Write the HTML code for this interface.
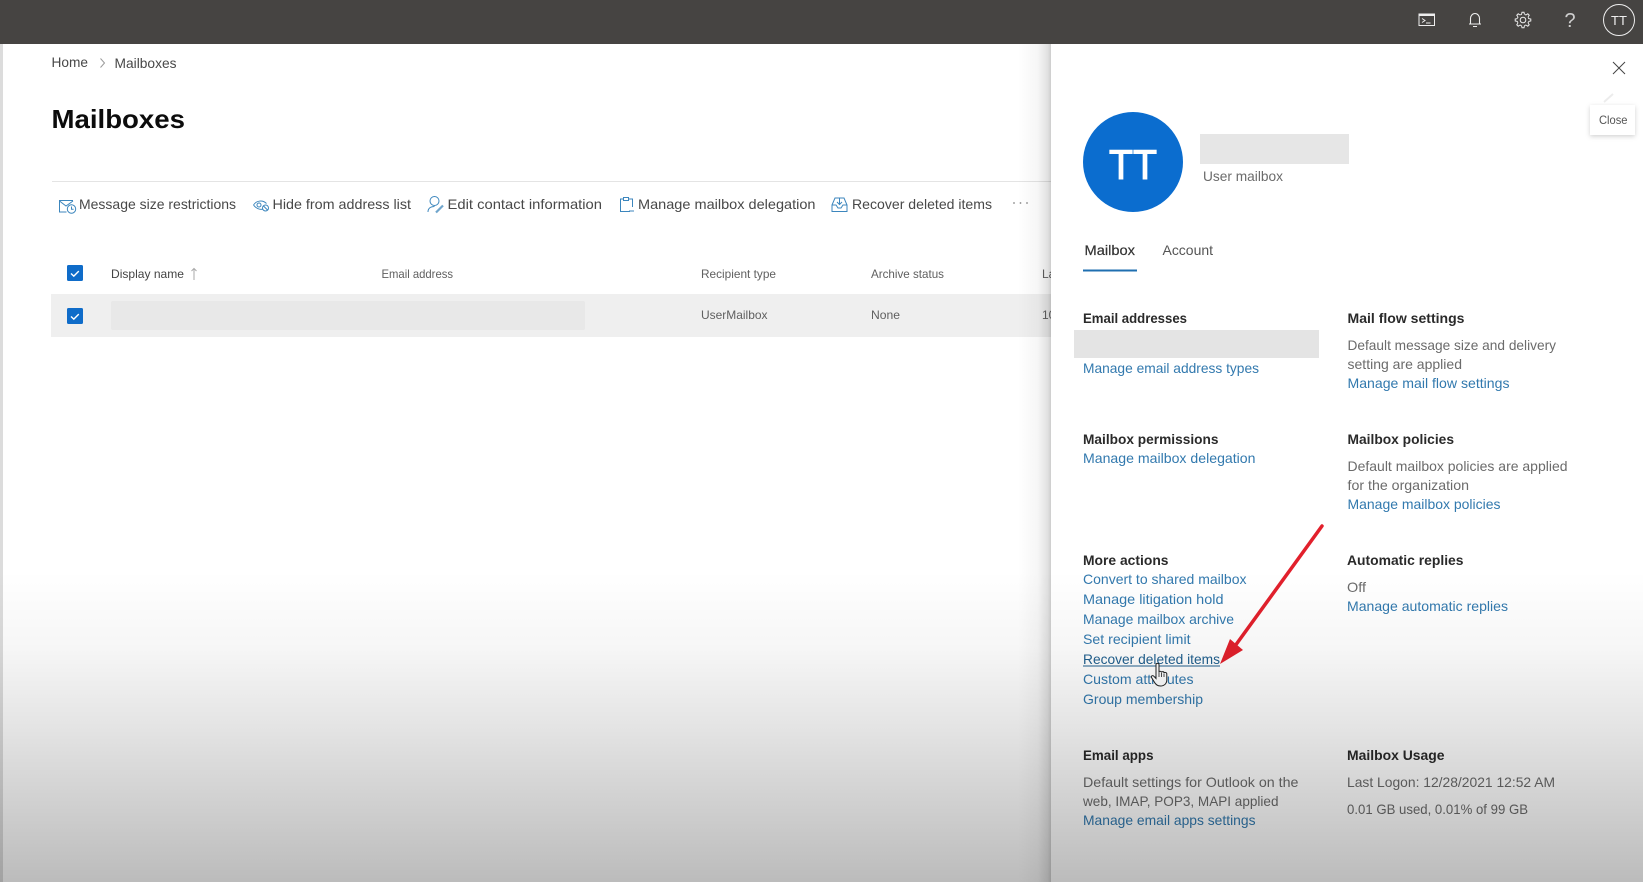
<!DOCTYPE html>
<html lang="en">
<head>
<meta charset="utf-8">
<title>Mailboxes</title>
<style>
html,body{margin:0;padding:0;background:#fff;width:1643px;height:882px;overflow:hidden}
svg{display:block;filter:blur(.3px)}
text{font-family:"Liberation Sans",Arial,sans-serif}
.b{font-size:14px;fill:#6b6b6b}
.l{font-size:14px;fill:#3279ae}
.h{font-size:14px;font-weight:bold;fill:#2a2a2a}
.c{font-size:14px;fill:#484848}
.t{font-size:12px;fill:#606060}
.ic{fill:none;stroke:#3c86bd;stroke-width:1}
</style>
</head>
<body>
<svg width="1643" height="882" viewBox="0 0 1643 882" xmlns="http://www.w3.org/2000/svg">
<defs>
<linearGradient id="sh" gradientUnits="userSpaceOnUse" x1="1018" y1="0" x2="1051" y2="0">
<stop offset="0" stop-color="#000" stop-opacity="0"/>
<stop offset=".6" stop-color="#000" stop-opacity=".035"/>
<stop offset=".9" stop-color="#000" stop-opacity=".12"/>
<stop offset="1" stop-color="#000" stop-opacity=".2"/>
</linearGradient>
<linearGradient id="fade" gradientUnits="userSpaceOnUse" x1="0" y1="570" x2="0" y2="882">
<stop offset="0" stop-color="#000" stop-opacity="0"/>
<stop offset=".25" stop-color="#000" stop-opacity=".035"/>
<stop offset=".48" stop-color="#000" stop-opacity=".1"/>
<stop offset="1" stop-color="#000" stop-opacity=".265"/>
</linearGradient>
<filter id="tip" x="-30%" y="-30%" width="160%" height="170%">
<feDropShadow dx="0" dy="1.500" stdDeviation="2.500" flood-color="#000" flood-opacity=".18"/>
</filter>
</defs>

<rect width="1643" height="882" fill="#fff"/>
<rect x="0" y="44" width="3" height="838" fill="#dcdcdc"/>

<!-- Breadcrumb and title -->
<text x="51.500" y="67" class="c" textLength="36.500" lengthAdjust="spacingAndGlyphs">Home</text>
<path d="M100.500 58.500l4 4.500-4 4.500" fill="none" stroke="#9a9a9a" stroke-width="1"/>
<text x="114.500" y="68" class="c" textLength="62" lengthAdjust="spacingAndGlyphs">Mailboxes</text>
<text x="51.500" y="128" font-size="26" font-weight="bold" fill="#0c0c0c" textLength="133.500" lengthAdjust="spacingAndGlyphs">Mailboxes</text>

<rect x="52" y="181" width="999" height="1" fill="#e4e4e4"/>

<!-- Command bar -->
<path class="ic" d="M73 200.500H59.500V212H66.500M59.500 201l6.500 5 7-5"/>
<circle class="ic" cx="71.500" cy="209" r="4.200"/>
<path class="ic" d="M71.500 206.500V209.200H73.600"/>
<text x="79" y="209" class="c" textLength="157" lengthAdjust="spacingAndGlyphs">Message size restrictions</text>

<path class="ic" d="M253.500 205c3-4.500 9-5.500 13-1.500M253.500 205c2.500 3.500 6.500 5 9.500 4"/>
<circle class="ic" cx="259" cy="205" r="2"/>
<circle class="ic" cx="265.500" cy="208" r="3"/>
<path class="ic" d="M263.500 206l4 4"/>
<text x="272.500" y="209" class="c" textLength="138.500" lengthAdjust="spacingAndGlyphs">Hide from address list</text>

<circle class="ic" cx="434.500" cy="201" r="4.500"/>
<path class="ic" d="M428 212c0-3.500 2.500-5.500 6.500-5.500"/>
<path d="M436 212.500l7-7" fill="none" stroke="#6fa5cc" stroke-width="2.200"/>
<text x="447.500" y="209" class="c" textLength="154.500" lengthAdjust="spacingAndGlyphs">Edit contact information</text>

<path class="ic" d="M623.500 199H620.500V211.500H630M632.500 207V199H629M623.500 197.500H628.500V200.500H623.500ZM629 211h5"/>
<text x="638" y="209" class="c" textLength="177.500" lengthAdjust="spacingAndGlyphs">Manage mailbox delegation</text>

<path class="ic" d="M835 198H844L847 205V211.500H832V205ZM832 205H836L838 208H841L843 205H847M839.500 198V204.500M837 202l2.500 2.500 2.500-2.500"/>
<text x="852" y="209" class="c" textLength="140" lengthAdjust="spacingAndGlyphs">Recover deleted items</text>

<circle cx="1014" cy="203" r=".9" fill="#888"/>
<circle cx="1020.500" cy="203" r=".9" fill="#888"/>
<circle cx="1027" cy="203" r=".9" fill="#888"/>

<!-- Table -->
<rect x="67" y="265" width="16" height="16" rx="1.500" fill="#0f6cc9"/>
<path d="M71 273.500l2.800 2.600 5-5" fill="none" stroke="#fff" stroke-width="1.400"/>
<text x="111" y="278" font-size="12" fill="#444" textLength="73" lengthAdjust="spacingAndGlyphs">Display name</text>
<path d="M194 280V268.500M191.500 271l2.500-2.500 2.500 2.500" fill="none" stroke="#aaa" stroke-width="1"/>
<text x="381.500" y="278" class="t" textLength="71.500" lengthAdjust="spacingAndGlyphs">Email address</text>
<text x="701" y="278" class="t" textLength="75" lengthAdjust="spacingAndGlyphs">Recipient type</text>
<text x="871" y="278" class="t" textLength="73" lengthAdjust="spacingAndGlyphs">Archive status</text>
<text x="1042" y="278" class="t">Last logon</text>

<rect x="51" y="294" width="1001" height="43" fill="#efefef"/>
<rect x="111" y="301" width="474" height="29" rx="2" fill="#e8e8e8"/>
<rect x="67" y="308" width="16" height="16" rx="1.500" fill="#0f6cc9"/>
<path d="M71 316.500l2.800 2.600 5-5" fill="none" stroke="#fff" stroke-width="1.400"/>
<text x="701" y="319" class="t" textLength="66.500" lengthAdjust="spacingAndGlyphs">UserMailbox</text>
<text x="871" y="319" class="t" textLength="29" lengthAdjust="spacingAndGlyphs">None</text>
<text x="1042" y="319" class="t">10/20/2021</text>

<!-- Panel shadow and panel -->
<rect x="1018" y="44" width="33" height="838" fill="url(#sh)"/>
<rect x="1051" y="44" width="592" height="838" fill="#fff"/>

<!-- Close control -->
<path d="M1613 62l12 12M1625 62l-12 12" fill="none" stroke="#444" stroke-width="1"/>
<path d="M1604 102l9-8" stroke="#ececec" stroke-width="2"/>
<rect x="1590" y="105" width="45" height="30" fill="#fff" filter="url(#tip)"/>
<text x="1599" y="124" font-size="12" fill="#555" textLength="28.500" lengthAdjust="spacingAndGlyphs">Close</text>

<!-- Panel header -->
<circle cx="1133" cy="162" r="50" fill="#0b6dcf"/>
<text x="1109" y="179" font-size="42" fill="#fff" stroke="#fff" stroke-width="1.100" textLength="48" lengthAdjust="spacingAndGlyphs">TT</text>
<rect x="1200" y="134" width="149" height="30" fill="#e6e6e6"/>
<text x="1203" y="181" class="b" textLength="80" lengthAdjust="spacingAndGlyphs">User mailbox</text>

<text x="1084.500" y="255" font-size="14" fill="#333" stroke="#333" stroke-width=".2" textLength="50.500" lengthAdjust="spacingAndGlyphs">Mailbox</text>
<text x="1162.500" y="255" font-size="14" fill="#555" textLength="50.500" lengthAdjust="spacingAndGlyphs">Account</text>
<rect x="1083" y="269.500" width="54" height="2" fill="#1f6fb0"/>

<!-- Panel sections -->
<text x="1083" y="323" class="h" textLength="104" lengthAdjust="spacingAndGlyphs">Email addresses</text>
<rect x="1074" y="330" width="245" height="28" fill="#e4e4e4"/>
<text x="1083" y="373" class="l" textLength="176" lengthAdjust="spacingAndGlyphs">Manage email address types</text>

<text x="1347.500" y="323" class="h" textLength="117" lengthAdjust="spacingAndGlyphs">Mail flow settings</text>
<text x="1347.500" y="350" class="b" textLength="208.500" lengthAdjust="spacingAndGlyphs">Default message size and delivery</text>
<text x="1347.500" y="369" class="b" textLength="114.500" lengthAdjust="spacingAndGlyphs">setting are applied</text>
<text x="1347.500" y="388" class="l" textLength="162" lengthAdjust="spacingAndGlyphs">Manage mail flow settings</text>

<text x="1083" y="444" class="h" textLength="135.500" lengthAdjust="spacingAndGlyphs">Mailbox permissions</text>
<text x="1083" y="463" class="l" textLength="172.500" lengthAdjust="spacingAndGlyphs">Manage mailbox delegation</text>

<text x="1347.500" y="444" class="h" textLength="106.500" lengthAdjust="spacingAndGlyphs">Mailbox policies</text>
<text x="1347.500" y="471" class="b" textLength="220" lengthAdjust="spacingAndGlyphs">Default mailbox policies are applied</text>
<text x="1347.500" y="490" class="b" textLength="121.500" lengthAdjust="spacingAndGlyphs">for the organization</text>
<text x="1347.500" y="509" class="l" textLength="153" lengthAdjust="spacingAndGlyphs">Manage mailbox policies</text>

<text x="1083" y="565" class="h" textLength="85.500" lengthAdjust="spacingAndGlyphs">More actions</text>
<text x="1083" y="584" class="l" textLength="163.500" lengthAdjust="spacingAndGlyphs">Convert to shared mailbox</text>
<text x="1083" y="604" class="l" textLength="140.500" lengthAdjust="spacingAndGlyphs">Manage litigation hold</text>
<text x="1083" y="624" class="l" textLength="151" lengthAdjust="spacingAndGlyphs">Manage mailbox archive</text>
<text x="1083" y="644" class="l" textLength="107.500" lengthAdjust="spacingAndGlyphs">Set recipient limit</text>
<text x="1083" y="664" class="l" style="fill:#1f5f8e" textLength="137" lengthAdjust="spacingAndGlyphs">Recover deleted items</text>
<rect x="1083" y="665.500" width="137" height="1" fill="#1f5f8e"/>
<text x="1083" y="684" class="l" textLength="110.500" lengthAdjust="spacingAndGlyphs">Custom attributes</text>
<text x="1083" y="704" class="l" textLength="120" lengthAdjust="spacingAndGlyphs">Group membership</text>

<text x="1347" y="565" class="h" textLength="116.500" lengthAdjust="spacingAndGlyphs">Automatic replies</text>
<text x="1347" y="592" class="b" textLength="19" lengthAdjust="spacingAndGlyphs">Off</text>
<text x="1347" y="611" class="l" textLength="161" lengthAdjust="spacingAndGlyphs">Manage automatic replies</text>

<text x="1083" y="760" class="h" textLength="70.500" lengthAdjust="spacingAndGlyphs">Email apps</text>
<text x="1083" y="787" class="b" textLength="215.500" lengthAdjust="spacingAndGlyphs">Default settings for Outlook on the</text>
<text x="1083" y="806" class="b" textLength="195.500" lengthAdjust="spacingAndGlyphs">web, IMAP, POP3, MAPI applied</text>
<text x="1083" y="825" class="l" textLength="172.500" lengthAdjust="spacingAndGlyphs">Manage email apps settings</text>

<text x="1347" y="760" class="h" textLength="97.500" lengthAdjust="spacingAndGlyphs">Mailbox Usage</text>
<text x="1347" y="787" class="b" textLength="208" lengthAdjust="spacingAndGlyphs">Last Logon: 12/28/2021 12:52 AM</text>
<text x="1347" y="814" class="b" textLength="181" lengthAdjust="spacingAndGlyphs">0.01 GB used, 0.01% of 99 GB</text>

<!-- Red annotation arrow -->
<path d="M1322 526L1235 646" stroke="#e2202c" stroke-width="3.500" stroke-linecap="round" fill="none"/>
<path d="M1220 664L1230 639L1243 650Z" fill="#e2202c"/>

<!-- Hand cursor -->
<path d="M1156 664.500c0-1.500 3-1.500 3 0V672c0-1 2.500-1 2.500 .5c.2-1.200 2.500-1.200 2.500 .5c.4-1 2.800-.8 2.800 1V680c0 3.500-2.500 6-6.300 6c-3.200 0-5-1.500-6.500-4.500l-2.500-4c-.8-1.500 1.200-2.500 2.400-1.200l2.100 2.200Z" fill="#fff" stroke="#222" stroke-width="1"/>
<path d="M1159 672v5M1161.500 673v4M1164 673.500v3.500" stroke="#222" stroke-width=".8"/>

<!-- Bottom fade over page -->
<rect x="0" y="570" width="1643" height="312" fill="url(#fade)"/>

<!-- Top bar -->
<rect x="0" y="0" width="1643" height="44" fill="#464442"/>
<rect x="1419" y="14" width="15.500" height="11.500" fill="none" stroke="#eee" stroke-width="1"/>
<rect x="1419" y="14" width="15.500" height="2" fill="#eee"/>
<path d="M1422 18.500l3 2-3 2M1426 23h4.500" fill="none" stroke="#eee" stroke-width="1"/>

<path d="M1470.500 23.500V18.500a4.500 5 0 0 1 9 0V23.500M1469 24h12M1473 26.500h4" fill="none" stroke="#eee" stroke-width="1.100"/>

<g transform="translate(1523 20)" fill="none" stroke="#eee" stroke-width="1">
<circle r="2.800"/>
<circle r="5.800" stroke-dasharray="1.755 2.800" stroke-dashoffset="-1.400"/>
<path d="M-1.400 -5.800L-1 -7.800H1L1.400 -5.800"/>
<path transform="rotate(45)" d="M-1.400 -5.800L-1 -7.800H1L1.400 -5.800"/>
<path transform="rotate(90)" d="M-1.400 -5.800L-1 -7.800H1L1.400 -5.800"/>
<path transform="rotate(135)" d="M-1.400 -5.800L-1 -7.800H1L1.400 -5.800"/>
<path transform="rotate(180)" d="M-1.400 -5.800L-1 -7.800H1L1.400 -5.800"/>
<path transform="rotate(225)" d="M-1.400 -5.800L-1 -7.800H1L1.400 -5.800"/>
<path transform="rotate(270)" d="M-1.400 -5.800L-1 -7.800H1L1.400 -5.800"/>
<path transform="rotate(315)" d="M-1.400 -5.800L-1 -7.800H1L1.400 -5.800"/>
</g>

<text x="1570" y="27" font-size="20" fill="#cfcfcf" text-anchor="middle">?</text>

<circle cx="1619" cy="20" r="15.500" fill="none" stroke="#eee" stroke-width="1"/>
<text x="1619" y="25" font-size="13" fill="#eee" text-anchor="middle">TT</text>
</svg>
</body>
</html>
